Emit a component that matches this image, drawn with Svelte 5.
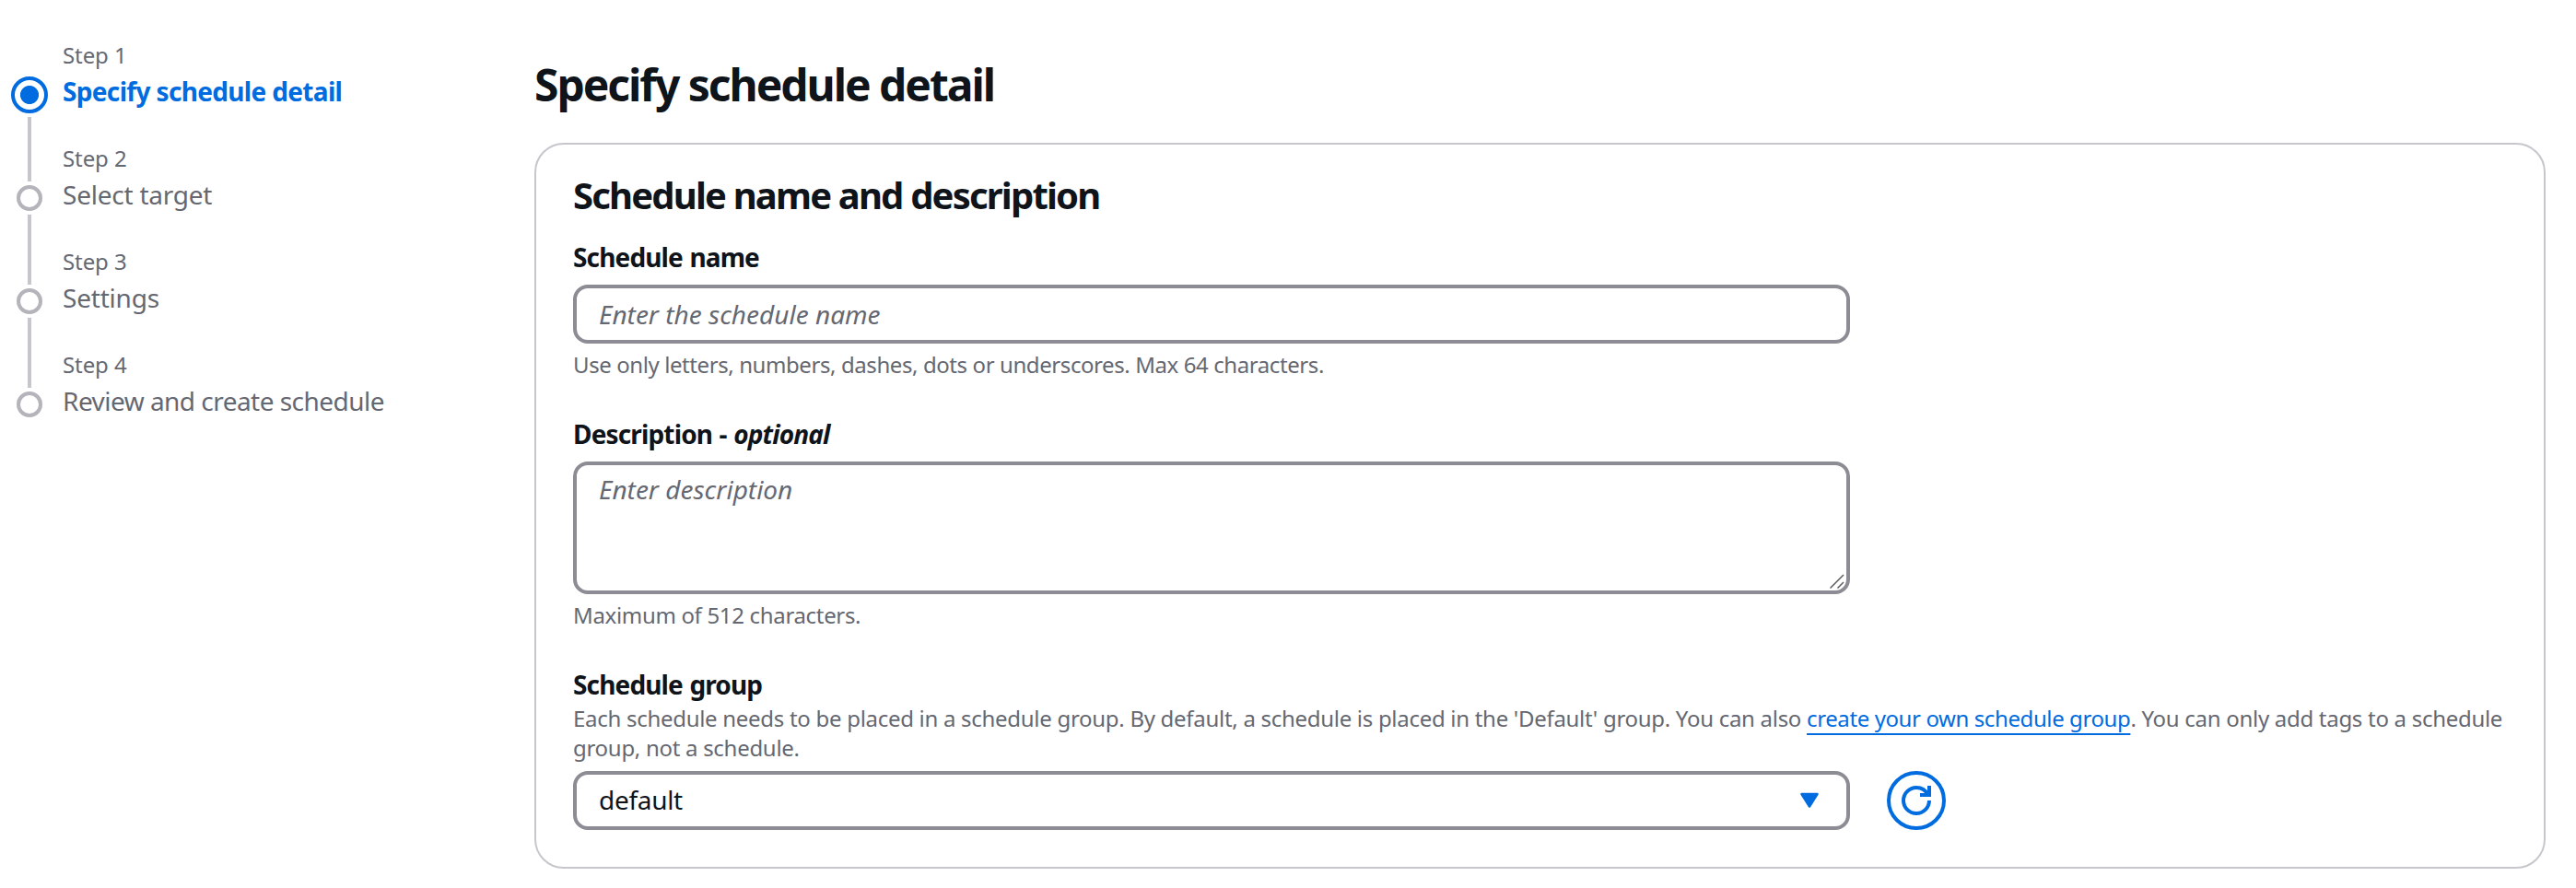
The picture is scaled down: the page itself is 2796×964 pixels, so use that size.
<script>
  const steps = [
    { title: 'Specify schedule detail', tracking: -0.66 },
    { title: 'Select target', tracking: -0.23 },
    { title: 'Settings', tracking: -0.2 },
    { title: 'Review and create schedule', tracking: -0.53 }
  ];
  let active = $state(0);
  let name = $state('');
  let description = $state('');
</script>

<div class="page">
  <nav>
    <ol>
      {#each steps as step, i}
        <li class:active={i === active}>
          <div class="track">
            <span class="dot"></span>
            {#if i < steps.length - 1}<span class="line"></span>{/if}
          </div>
          <div class="step">
            <span class="number">Step {i + 1}</span>
            <span class="title" style:letter-spacing="{step.tracking}px">{step.title}</span>
          </div>
        </li>
      {/each}
    </ol>
  </nav>

  <main>
    <h1>Specify schedule detail</h1>
    <section class="card">
      <h2>Schedule name and description</h2>

      <div class="field">
        <label for="name">Schedule name</label>
        <input id="name" class="control" placeholder="Enter the schedule name" bind:value={name} />
        <p class="hint">Use only letters, numbers, dashes, dots or underscores. Max 64 characters.</p>
      </div>

      <div class="field">
        <label for="description">Description - <em>optional</em></label>
        <div class="area">
          <textarea id="description" class="control" placeholder="Enter description" bind:value={description}></textarea>
          <svg class="grip" width="16" height="17" viewBox="0 0 16 17">
            <path d="M.5 15.500 15 1M8.500 15.500 15 9" fill="none" stroke="#5c5c60" stroke-width="1.500" />
          </svg>
        </div>
        <p class="hint short">Maximum of 512 characters.</p>
      </div>

      <div class="field">
        <span class="label">Schedule group</span>
        <p class="about">Each schedule needs to be placed in a schedule group. By default, a schedule is placed in the 'Default' group. You can also <a href="#group">create your own schedule group</a>. You can only add tags to a schedule group, not a schedule.</p>
        <div class="row">
          <button class="control select">
            <span>default</span>
            <svg width="22" height="18" viewBox="0 0 22 18">
              <path d="M2.500 2h17L11 15.500z" fill="#006ce0" stroke="#006ce0" stroke-width="2.500" stroke-linejoin="round" />
            </svg>
          </button>
          <button class="refresh" aria-label="Refresh">
            <svg width="32" height="32" viewBox="0 0 16 16" fill="none" stroke="#006ce0" stroke-width="2">
              <path d="M15 8c0 3.870-3.130 7-7 7s-7-3.130-7-7 3.130-7 7-7c2.790 0 5.200 1.630 6.330 4M10 5h5V0" />
            </svg>
          </button>
        </div>
      </div>
    </section>
  </main>
</div>

<style>
  :global(body) {
    background: #fff;
  }
  .page {
    display: flex;
    height: 964px;
    overflow: hidden;
    box-sizing: border-box;
    font-family: 'Noto Sans', 'Open Sans', sans-serif;
    font-size: 28px;
    line-height: 40px;
    letter-spacing: -0.3px;
    color: #0f141a;
  }
  nav {
    width: 580px;
    flex: none;
  }
  ol {
    list-style: none;
    margin: 0;
    padding: 44px 0 0 12px;
  }
  li {
    display: flex;
    gap: 16px;
    height: 112px;
    color: #656871;
  }
  .track {
    width: 40px;
    display: flex;
    flex-direction: column;
    align-items: center;
    padding-top: 45px;
    box-sizing: border-box;
  }
  .dot {
    box-sizing: border-box;
    width: 28px;
    height: 28px;
    flex: none;
    border: 4px solid #b4b4bb;
    border-radius: 50%;
  }
  .line {
    width: 4px;
    height: 76px;
    flex: none;
    margin-top: 4px;
    background: #c6c6cd;
  }
  .active .track {
    padding-top: 39px;
  }
  .active .dot {
    width: 40px;
    height: 40px;
    border-color: #006ce0;
    background: radial-gradient(circle, #006ce0 9.600px, transparent 10.400px);
  }
  .active .line {
    height: 70px;
  }
  .step {
    display: flex;
    flex-direction: column;
    gap: 3px;
    white-space: nowrap;
  }
  .number,
  .hint,
  .about {
    font-size: 24px;
    line-height: 32px;
    letter-spacing: -0.41px;
    color: #656871;
  }
  .number {
    letter-spacing: -0.1px;
  }
  .active .title {
    color: #006ce0;
    font-weight: 700;
  }
  main {
    width: 2183px;
    padding-top: 62px;
  }
  h1,
  h2,
  p {
    margin: 0;
  }
  h1 {
    font-size: 48px;
    line-height: 60px;
    letter-spacing: -2.040px;
  }
  .card {
    box-sizing: border-box;
    margin-top: 33px;
    height: 788px;
    padding: 31px 40px 40px;
    border: 2px solid #c6c6cd;
    border-radius: 32px;
  }
  h2 {
    font-size: 40px;
    line-height: 48px;
    letter-spacing: -1.820px;
  }
  .field {
    display: flex;
    flex-direction: column;
    align-items: flex-start;
    margin-top: 39px;
  }
  h2 + .field {
    margin-top: 23px;
  }
  label,
  .label {
    font-weight: 700;
    letter-spacing: -0.85px;
    word-spacing: 1px;
    margin-bottom: 10px;
  }
  .label {
    margin-bottom: 1px;
  }
  .control {
    box-sizing: border-box;
    width: 1386px;
    height: 64px;
    border: 4px solid #8c8c94;
    border-radius: 16px;
    padding: 0 24px;
    margin: 0;
    background: #fff;
    color: #0f141a;
    font: inherit;
    letter-spacing: inherit;
    outline: 0;
  }
  .control::placeholder {
    color: #656871;
    opacity: 1;
    font-style: italic;
    letter-spacing: 0;
  }
  .area {
    position: relative;
    height: 144px;
  }
  textarea.control {
    display: block;
    height: 144px;
    padding-top: 6px;
    resize: none;
  }
  .grip {
    position: absolute;
    right: 6px;
    bottom: 5px;
  }
  .hint {
    margin-top: 7px;
  }
  .short {
    letter-spacing: -0.33px;
  }
  .about {
    margin-bottom: 9px;
    letter-spacing: -0.29px;
  }
  a {
    color: #006ce0;
    letter-spacing: -0.4px;
    text-decoration: underline;
    text-decoration-thickness: 2px;
    text-underline-offset: 7px;
    text-decoration-skip-ink: none;
  }
  .row {
    display: flex;
    gap: 40px;
  }
  .select {
    display: flex;
    align-items: center;
    justify-content: space-between;
    padding-right: 29px;
  }
  .select span {
    padding-bottom: 2px;
  }
  .refresh {
    box-sizing: border-box;
    width: 64px;
    height: 64px;
    padding: 0;
    border: 4px solid #006ce0;
    border-radius: 50%;
    background: #fff;
    display: flex;
    align-items: center;
    justify-content: center;
  }
</style>
